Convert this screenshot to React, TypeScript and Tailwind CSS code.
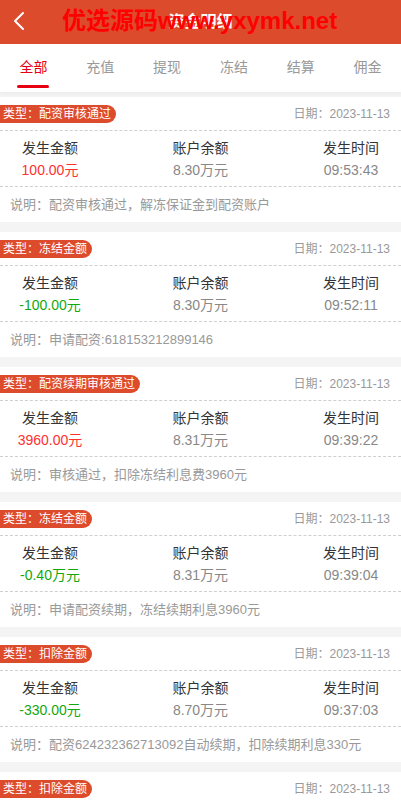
import React, { useState } from 'react';

type Record = {
    type: string;
    amount: string;
    balance: string;
    time: string;
    note: string;
};

const tabs = ['全部', '充值', '提现', '冻结', '结算', '佣金'];

const records: Record[] = [
    { type: '配资审核通过', amount: '100.00元', balance: '8.30万元', time: '09:53:43', note: '配资审核通过，解冻保证金到配资账户' },
    { type: '冻结金额', amount: '-100.00元', balance: '8.30万元', time: '09:52:11', note: '申请配资:618153212899146' },
    { type: '配资续期审核通过', amount: '3960.00元', balance: '8.31万元', time: '09:39:22', note: '审核通过，扣除冻结利息费3960元' },
    { type: '冻结金额', amount: '-0.40万元', balance: '8.31万元', time: '09:39:04', note: '申请配资续期，冻结续期利息3960元' },
    { type: '扣除金额', amount: '-330.00元', balance: '8.70万元', time: '09:37:03', note: '配资624232362713092自动续期，扣除续期利息330元' },
    { type: '扣除金额', amount: '-330.00元', balance: '8.73万元', time: '09:37:01', note: '配资624232362713092自动续期，扣除续期利息330元' },
];

const Cell = ({ label, value, color }: { label: string; value: string; color: string }) => (
    <div className="w-[100px] flex flex-col items-center text-[14px] leading-[22px]">
        <span className="text-[#333]">{label}</span>
        <span className={color}>{value}</span>
    </div>
);

const RecordCard = ({ item }: { item: Record }) => {
    const negative = item.amount.startsWith('-');
    return (
        <div className="bg-white h-[125px] shrink-0 flex flex-col">
            {/* type badge + date */}
            <div className="h-[34px] flex items-center justify-between pr-[11px] border-b border-dashed border-[#cfcfcf]">
                <span className="h-[18px] leading-[18px] pl-[3px] pr-[5px] rounded-r-full bg-[#dd4b2d] text-white text-[12px]">
                    类型：{item.type}
                </span>
                <span className="text-[12px] text-[#999]">日期：2023-11-13</span>
            </div>

            <div className="h-[56px] flex items-center justify-between border-b border-dashed border-[#cfcfcf]">
                <Cell label="发生金额" value={item.amount} color={negative ? 'text-[#14a80c]' : 'text-[#ff3030]'} />
                <Cell label="账户余额" value={item.balance} color="text-[#888]" />
                <Cell label="发生时间" value={item.time} color="text-[#888]" />
            </div>

            <div className="flex-1 flex items-center px-[10px] text-[13px] text-[#999] whitespace-nowrap">
                说明：{item.note}
            </div>
        </div>
    );
};

export default function App() {
    const [active, setActive] = useState(0);

    return (
        <div
            className="w-[401px] h-[800px] overflow-hidden bg-[#f4f4f4] flex flex-col"
            style={{ fontFamily: '"Liberation Sans", "Noto Sans CJK SC", sans-serif' }}
        >
            {/* top bar */}
            <div className="relative h-[44px] shrink-0 bg-[#dd4b2d] flex items-center justify-center">
                <svg className="absolute left-[12px] top-[11px]" width="14" height="20" viewBox="0 0 14 20" fill="none">
                    <path d="M11 2 L3 10 L11 18" stroke="white" strokeWidth="2" strokeLinecap="round" strokeLinejoin="round" />
                </svg>
                <span className="text-white text-[16px] font-bold">资金明细</span>
                <span className="absolute left-[62px] top-[6px] text-[#ff0000] text-[24px] font-bold leading-[30px]">
                    优选源码www.yxymk.net
                </span>
            </div>

            {/* tabs */}
            <div className="h-[48px] shrink-0 bg-white grid grid-cols-6 shadow-[0_2px_4px_rgba(0,0,0,0.04)]">
                {tabs.map((t, i) => (
                    <button
                        key={t}
                        onClick={() => setActive(i)}
                        className={`relative flex items-center justify-center text-[14px] pb-[2px] ${i === active ? 'text-[#e60012]' : 'text-[#999]'}`}
                    >
                        {t}
                        {i === active && (
                            <span className="absolute bottom-[4px] left-1/2 -translate-x-1/2 w-[32px] h-[3px] rounded-full bg-[#e60012]" />
                        )}
                    </button>
                ))}
            </div>

            {/* records */}
            <div className="flex flex-col gap-[10px] pt-[5px]">
                {records.map((r, i) => (
                    <RecordCard key={i} item={r} />
                ))}
            </div>
        </div>
    );
}
